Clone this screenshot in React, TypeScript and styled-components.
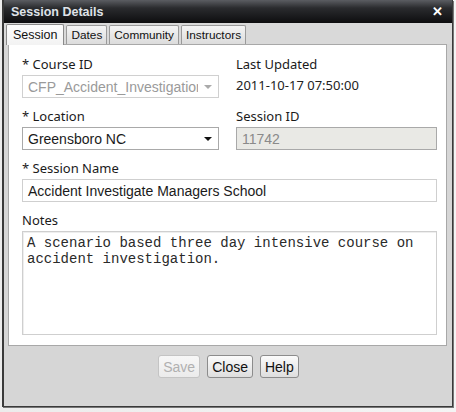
import React from "react";
import styled, { createGlobalStyle, css } from "styled-components";

const Global = createGlobalStyle`
  html, body { margin: 0; padding: 0; background: #ececec; }
  * { box-sizing: border-box; }
`;

const Page = styled.div`
  width: 456px;
  height: 412px;
  padding: 0 3px 5px 2px;
  background: linear-gradient(to right, #ececec, #f4f4f4);
`;

const Window = styled.div`
  width: 451px;
  height: 407px;
  border: 1px solid #3a3a3a;
  border-left: 2px solid #3a3a3a;
  border-top: none;
  background: #d6d6d6;
  display: flex;
  flex-direction: column;
  box-shadow: 1px 1px 0 #777;
`;

const TitleBar = styled.div`
  height: 23px;
  flex: none;
  display: flex;
  align-items: center;
  justify-content: space-between;
  padding: 0 9px 0 7px;
  background: linear-gradient(#5b5d62 0%, #2a2b2e 35%, #0d0d0f 100%);
  font-family: "Liberation Sans", Arial, sans-serif;
  font-weight: bold;
  font-size: 12.5px;
  color: #dfe2e8;
`;

const CloseX = styled.span`
  font-size: 13px;
  font-weight: bold;
  line-height: 1;
  color: #fff;
`;

const TabStrip = styled.div`
  display: flex;
  align-items: flex-end;
  gap: 2px;
  height: 21px;
  padding-left: 2px;
  background: #d9d9d9;
`;

const Tab = styled.div<{ $active?: boolean }>`
  height: 19px;
  padding: 0 4px;
  display: flex;
  align-items: center;
  border: 1px solid #9a9a9a;
  border-bottom: none;
  border-radius: 2px 2px 0 0;
  font-family: "Liberation Sans", Arial, sans-serif;
  font-size: 11.8px;
  color: #111;
  background: linear-gradient(#f4f4f4, #dcdcdc);
  ${(p) =>
    p.$active &&
    css`
      height: 21px;
      padding: 0 6px;
      background: linear-gradient(#fdfdfd, #f3f3f3);
      border-color: #8a8a8a;
      font-size: 12.5px;
      margin-bottom: -1px;
      position: relative;
      z-index: 1;
    `}
`;

const Panel = styled.div`
  margin: 0 5px 0 4px;
  height: 302px;
  background: #fff;
  border: 1px solid #a8a8a8;
  padding: 11px 8px 0 13px;
  display: grid;
  grid-template-columns: 197px 201px;
  column-gap: 17px;
  align-content: start;
`;

const Field = styled.div<{ $span?: boolean }>`
  display: flex;
  flex-direction: column;
  grid-column: ${(p) => (p.$span ? "1 / 3" : "auto")};
`;

const Label = styled.div<{ $first?: boolean }>`
  font-family: "Noto Sans", "Open Sans", sans-serif;
  font-size: 13px;
  line-height: 16px;
  color: #1a1a1a;
  margin-top: ${(p) => (p.$first ? "0" : "10px")};
  margin-bottom: 3px;
`;

const Value = styled.div`
  font-family: "Noto Sans", "Open Sans", sans-serif;
  font-size: 13px;
  line-height: 16px;
  color: #222;
  margin-top: 2px;
`;

const Select = styled.div<{ $disabled?: boolean }>`
  height: 23px;
  display: flex;
  align-items: center;
  justify-content: space-between;
  padding: 0 6px 0 5px;
  border: 1px solid ${(p) => (p.$disabled ? "#d0d0d0" : "#a9a9a9")};
  background: #fff;
  font-family: "Liberation Sans", Arial, sans-serif;
  font-size: 14px;
  color: ${(p) => (p.$disabled ? "#9a9a9a" : "#1a1a1a")};
  overflow: hidden;
  white-space: nowrap;
`;

const SelectText = styled.span`
  overflow: hidden;
  flex: 1;
  white-space: nowrap;
`;

const Arrow = styled.span<{ $disabled?: boolean }>`
  flex: none;
  width: 0;
  height: 0;
  margin-left: 6px;
  border-left: 4px solid transparent;
  border-right: 4px solid transparent;
  border-top: 4px solid ${(p) => (p.$disabled ? "#aaa" : "#111")};
`;

const Input = styled.div<{ $readonly?: boolean }>`
  height: 23px;
  display: flex;
  align-items: center;
  padding: 0 5px;
  border: 1px solid ${(p) => (p.$readonly ? "#a9a9a9" : "#cfcfcf")};
  background: ${(p) => (p.$readonly ? "#e9e9e5" : "#fff")};
  font-family: "Liberation Sans", Arial, sans-serif;
  font-size: 14px;
  color: ${(p) => (p.$readonly ? "#8a8a8a" : "#1a1a1a")};
`;

const TextArea = styled.div`
  height: 104px;
  padding: 3px 4px;
  border: 1px solid #cfcfcf;
  box-shadow: inset 1px 1px 0 #eee;
  font-family: "Liberation Mono", "Courier New", monospace;
  font-size: 14px;
  line-height: 16px;
  color: #2a2a2a;
  white-space: pre;
  overflow: hidden;
`;

const Footer = styled.div`
  display: flex;
  justify-content: center;
  gap: 7px;
  padding-top: 9px;
  padding-left: 1px;
`;

const Button = styled.div<{ $disabled?: boolean }>`
  height: 23px;
  padding: 0 4px;
  display: flex;
  align-items: center;
  border: 1px solid ${(p) => (p.$disabled ? "#c4c4c4" : "#8c8c8c")};
  border-radius: 3px;
  background: ${(p) =>
    p.$disabled ? "linear-gradient(#f7f7f7, #ebebeb)" : "linear-gradient(#fbfbfb, #dedede)"};
  font-family: "Liberation Sans", Arial, sans-serif;
  font-size: 14px;
  color: ${(p) => (p.$disabled ? "#b0b0b0" : "#111")};
`;

export default function App() {
  return (
    <>
      <Global />
      <Page>
        <Window>
          <TitleBar>
            <span>Session Details</span>
            <CloseX>✕</CloseX>
          </TitleBar>
          <TabStrip>
            <Tab $active>Session</Tab>
            <Tab>Dates</Tab>
            <Tab>Community</Tab>
            <Tab>Instructors</Tab>
          </TabStrip>
          <Panel>
            <Field>
              <Label $first>* Course ID</Label>
              <Select $disabled>
                <SelectText>CFP_Accident_Investigation</SelectText>
                <Arrow $disabled />
              </Select>
            </Field>
            <Field>
              <Label $first>Last Updated</Label>
              <Value>2011-10-17 07:50:00</Value>
            </Field>
            <Field>
              <Label>* Location</Label>
              <Select>
                <SelectText>Greensboro NC</SelectText>
                <Arrow />
              </Select>
            </Field>
            <Field>
              <Label>Session ID</Label>
              <Input $readonly>11742</Input>
            </Field>
            <Field $span>
              <Label>* Session Name</Label>
              <Input>Accident Investigate Managers School</Input>
            </Field>
            <Field $span>
              <Label>Notes</Label>
              <TextArea>
                {"A scenario based three day intensive course on\naccident investigation."}
              </TextArea>
            </Field>
          </Panel>
          <Footer>
            <Button $disabled>Save</Button>
            <Button>Close</Button>
            <Button>Help</Button>
          </Footer>
        </Window>
      </Page>
    </>
  );
}
